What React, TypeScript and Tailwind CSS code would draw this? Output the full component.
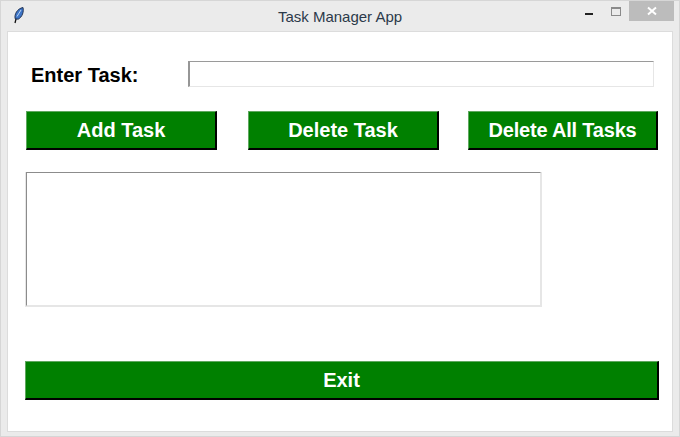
import React from "react";

const btn =
  "bg-[#008000] text-white font-bold text-[20px] leading-none flex items-center justify-center border border-t-[#5fa85f] border-l-[#5fa85f] border-r-2 border-b-2 border-r-black border-b-black";

function Feather() {
  return (
    <svg width="10" height="17" viewBox="0 0 10 17" className="shrink-0 block">
      <path d="M1 16 L2.8 9" stroke="#111" strokeWidth="1.3" fill="none" />
      <path d="M1.2 11.8 C0 7.5 3.2 1.6 9 0.5 C10 4.6 8.4 10 4.2 12.2 Z" fill="#3d74c6" stroke="#1b2a48" strokeWidth="0.9" />
      <path d="M3 9.5 L7 3" stroke="#bcd6f4" strokeWidth="1" fill="none" />
    </svg>
  );
}

export default function App() {
  return (
    <div className="w-[680px] h-[437px] bg-[#ebebeb] border border-[#d6d6d6] flex flex-col font-['Liberation_Sans',Arial,sans-serif] overflow-hidden">
      {/* title bar */}
      <div className="h-[30px] grid grid-cols-[1fr_auto_1fr] shrink-0">
        <div className="pl-[13px] pt-[6px]">
          <Feather />
        </div>
        <div className="text-[15px] leading-none pt-[8px] text-[#2b3a4a]">Task Manager App</div>
        <div className="flex items-start justify-end">
          <div className="w-[8px] mt-[12px] h-[2px] bg-[#222] mr-[18px]" />
          <div className="w-[10px] h-[9px] mt-[6px] border border-[#8a8a8a] border-t-2 mr-[8px]" />
          <div className="w-[45px] h-[20px] bg-[#bcbcbc] flex items-center justify-center mr-[5px]">
            <svg width="10" height="10" viewBox="0 0 10 10">
              <path d="M1 1.5 L9 8.5 M9 1.5 L1 8.5" stroke="#fff" strokeWidth="2" />
            </svg>
          </div>
        </div>
      </div>

      {/* client area */}
      <div className="mx-[6px] h-[401px] bg-white border border-[#dcdcdc] flex flex-col text-black">
        <div className="flex items-start pt-[29px] h-[79px]">
          <div className="ml-[23px] w-[157px] text-[20px] font-bold leading-none pt-[4px]">Enter Task:</div>
          <div className="w-[466px] h-[26px] border border-[#e6e6e6] border-t-[#9a9a9a] border-l-2 border-l-[#969696]" />
        </div>
        <div className="flex pl-[18px] h-[39px]">
          <div className={`${btn} w-[191px]`}>Add Task</div>
          <div className={`${btn} w-[191px] ml-[31px]`}>Delete Task</div>
          <div className={`${btn} w-[190px] ml-[29px] tracking-[-0.2px]`}>Delete All Tasks</div>
        </div>
        <div className="ml-[17px] mt-[22px] w-[517px] h-[135px] border border-t-0 border-[#e6e6e6]">
          <div className="w-full h-full border border-[#e6e6e6] border-t-[#8c8c8c] border-l-[#8c8c8c]" />
        </div>
        <div className={`${btn} ml-[17px] mt-[54px] w-[634px] h-[39px]`}>Exit</div>
      </div>
    </div>
  );
}
